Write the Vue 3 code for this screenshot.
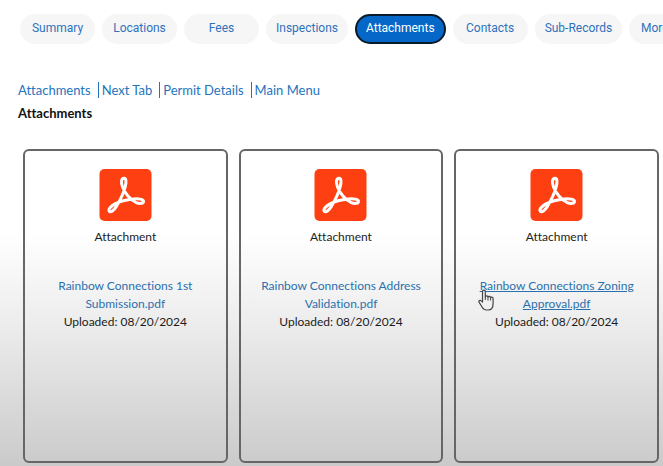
<script setup>
const tabs = ['Summary', 'Locations', 'Fees', 'Inspections', 'Attachments', 'Contacts', 'Sub-Records', 'More Info']
const activeTab = 'Attachments'
const links = ['Attachments', 'Next Tab', 'Permit Details', 'Main Menu']
const files = [
  { name: 'Rainbow Connections 1st Submission.pdf', date: '08/20/2024' },
  { name: 'Rainbow Connections Address Validation.pdf', date: '08/20/2024' },
  { name: 'Rainbow Connections Zoning Approval.pdf', date: '08/20/2024', hovered: true },
]
</script>

<template>
  <div class="page">
    <nav class="tabs" aria-label="Record sections">
      <button
        v-for="tab in tabs"
        :key="tab"
        type="button"
        class="tab"
        :class="{ active: tab === activeTab }"
      >{{ tab }}</button>
    </nav>

    <nav class="links" aria-label="Page links">
      <a v-for="link in links" :key="link" href="#" class="link">{{ link }}</a>
    </nav>
    <h1 class="title">Attachments</h1>

    <main class="cards">
      <article v-for="file in files" :key="file.name" class="card">
        <svg class="logo" viewBox="0 0 52 52" aria-hidden="true">
          <rect width="52" height="52" rx="5" fill="#fd3f11" />
          <path
            d="M24.500 9.200c-3.200.2-3 5-1.300 9.200 2.800 6.800 7.600 12 13 14.900 3.400 1.600 7.600 1.500 7.800-.8.200-2.400-5.200-3-10-2.600-6.700.6-13.400 2.200-18.500 5-4.300 2.300-7 5.400-5.800 7.300 1.400 2 4.800-1 7-4.600 3.600-5.800 7.300-13.200 9-19.700 1.100-4.100 1.300-8.900-1.200-8.700z"
            fill="none"
            stroke="#fff"
            stroke-width="3"
            stroke-linejoin="round"
          />
        </svg>
        <p class="kind">Attachment</p>
        <div class="file">
          <a href="#" class="name" :class="{ hovered: file.hovered }">{{ file.name }}</a>
          <p class="date">Uploaded: {{ file.date }}</p>
          <svg v-if="file.hovered" class="pointer" viewBox="0 0 16 22" aria-hidden="true">
            <path
              d="M4.500 13V2.500C4.500.6 7.300.6 7.300 2.500V8c.2-1.500 2.600-1.400 2.700.3.200-1.300 2.500-1.200 2.600.5.300-1.100 2.500-1 2.500.7v5c0 3.800-1.600 6.500-5 6.500H8.600c-2.200 0-3.600-1.200-4.600-3L1.200 13.400C.2 11.700 2.200 10.700 3.300 11.900z"
              fill="#f0f0f0"
              stroke="#444"
              stroke-width="1.200"
              stroke-linejoin="round"
            />
            <path d="M7.300 8v3M10 8.500V11.500M12.600 9v2.500" fill="none" stroke="#444" />
          </svg>
        </div>
      </article>
    </main>
  </div>
</template>

<style>
body {
  margin: 0;
}
</style>

<style scoped>
.page {
  box-sizing: border-box;
  min-height: 100vh;
  padding: 14px 4px 3px 18px;
  overflow: hidden;
  background: linear-gradient(#fff 50%, #ebebeb 71%, #cacaca);
  color: #1c1c1c;
  font-family: Lato, sans-serif;
  font-size: 12px;
  font-variant-ligatures: none;
  line-height: 18px;
}

.tabs {
  display: flex;
  gap: 7px;
  margin: 0 -4px 0 2px;
  overflow: hidden;
}

.tab {
  box-sizing: border-box;
  flex: none;
  min-width: 75px;
  height: 30px;
  padding: 0 10px 2px;
  border: 0;
  border-radius: 15px;
  background: #f6f6f6;
  color: #2e72bd;
  font: 12px Roboto, sans-serif;
}

.tab.active {
  padding: 0 9px 2px;
  border: 2px solid #0b1a2b;
  background: #0568c8;
  color: #fff;
}

.links {
  display: flex;
  margin-top: 38px;
  font-size: 13px;
}

.link {
  color: #2474bd;
  line-height: 16px;
  text-decoration: none;
}

.link + .link {
  margin-left: 7px;
  padding-left: 3px;
  border-left: 1px solid #2474bd;
}

.title {
  margin: 6px 0 0;
  color: #111;
  font-size: 13px;
  font-weight: 700;
  line-height: 18px;
}

.cards {
  display: grid;
  grid-template-columns: repeat(3, 1fr);
  gap: 11px;
  margin: 27px 0 0 5px;
}

.card {
  box-sizing: border-box;
  display: flex;
  flex-direction: column;
  align-items: center;
  min-height: 314px;
  padding: 18px 16px;
  border: 2px solid #666;
  border-radius: 6px;
  text-align: center;
}

.logo {
  width: 53px;
  height: 52px;
}

.kind {
  margin: 7px 0 31px;
}

.file {
  position: relative;
}

.name {
  color: #2b70ae;
  text-decoration: none;
}

.name.hovered {
  text-decoration: underline;
}

.date {
  margin: 0;
}

.pointer {
  position: absolute;
  top: 12px;
  left: 6px;
  width: 16px;
  height: 22px;
}
</style>
